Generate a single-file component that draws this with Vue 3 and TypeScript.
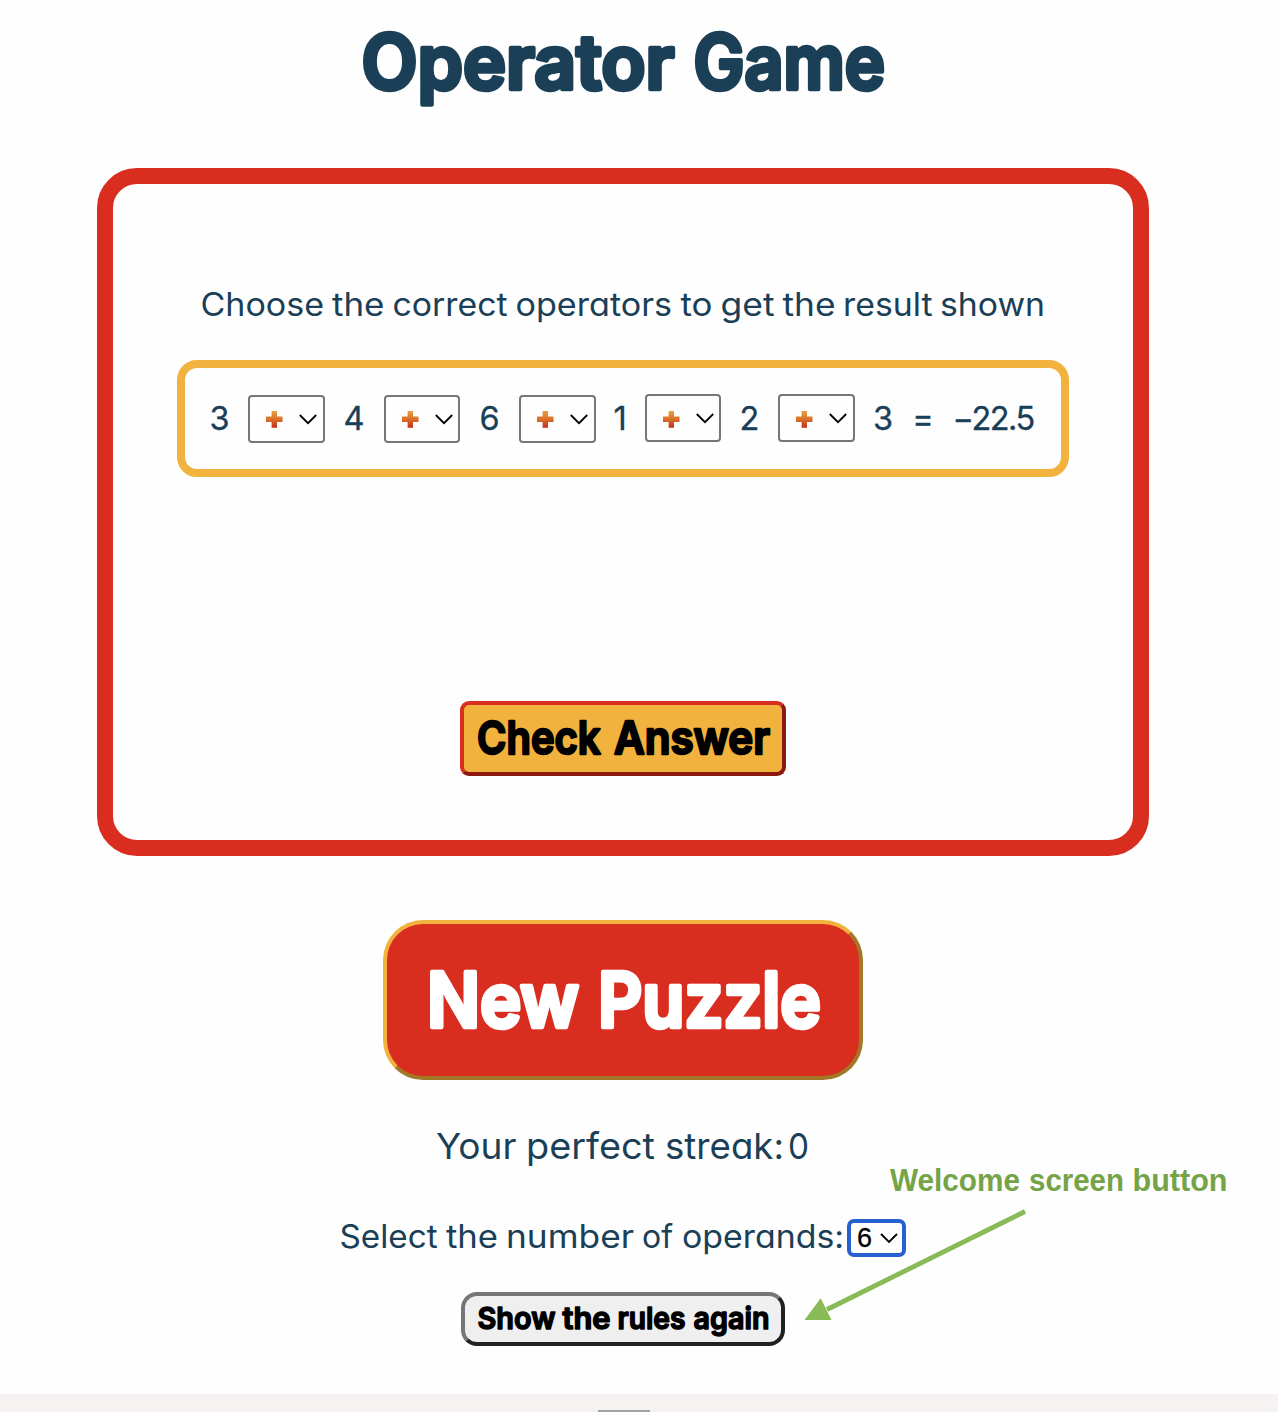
<script setup lang="ts">
import { h, ref, type FunctionalComponent } from 'vue'

// A word with its start and its width, in pixels from the left of its line.
type Word = [text: string, x: number, width: number]

interface LineProps {
  words: Word[]
  width: number
  height: number
  baseline: number
}

const Line: FunctionalComponent<LineProps> = (p) =>
  h(
    'svg',
    { class: 'line', width: p.width, height: p.height, viewBox: `0 0 ${p.width} ${p.height}` },
    p.words.map(([text, x, width]) =>
      h('text', { x, y: p.baseline, textLength: width, lengthAdjust: 'spacingAndGlyphs' }, text),
    ),
  )
Line.props = ['words', 'width', 'height', 'baseline']

const title: Word[] = [['Operator', 1.5, 313], ['Game', 333.5, 191.5]]
const prompt: Word[] = [
  ['Choose', 0.5, 123.5], ['the', 132, 52.5], ['correct', 192.5, 115], ['operators', 315.5, 156.5], ['to', 480.5, 32],
  ['get', 520.5, 54], ['the', 582.5, 53], ['result', 643, 89.5], ['shown', 740, 105],
]
const check: Word[] = [['Check', 13, 123.5], ['Answer', 150, 156]]
const puzzle: Word[] = [['New', 40, 152], ['Puzzle', 211, 223]]
const streak: Word[] = [['Your', 0, 80.5], ['perfect', 90, 129], ['streak:', 229, 119], ['0', 352, 21]]
const operandLabel: Word[] = [
  ['Select', -0.5, 98], ['the', 106, 52], ['number', 166, 128], ['of', 302, 31], ['operands:', 342, 162],
]
const rules: Word[] = [['Show', 12.5, 78], ['the', 97.5, 48], ['rules', 152.5, 68], ['again', 228.5, 76]]
const note: Word[] = [['Welcome', 0, 130], ['screen', 139, 95], ['button', 242.500, 95]]

interface Term {
  value: string
}
const terms = ref<Term[]>([{ value: '3' }, { value: '4' }, { value: '6' }, { value: '1' }, { value: '2' }])
const raised = (i: number) => i > 2
</script>

<template>
  <div class="page">
    <main>
      <h1><Line :words="title" :width="526" :height="90" :baseline="67.3" /></h1>

      <section class="board">
        <p class="body prompt"><Line :words="prompt" :width="846" :height="40" :baseline="29.5" /></p>
        <div class="equation body">
          <template v-for="(t, i) in terms" :key="i">
            <span class="num" :class="'n' + i">{{ t.value }}</span>
            <span class="operator" :class="{ raised: raised(i) }">
              <svg width="72" height="44" viewBox="0 0 72 44">
                <defs>
                  <linearGradient id="fire" x1="0" y1="0" x2="0" y2="1">
                    <stop offset="0" stop-color="#e7a23c" />
                    <stop offset=".5" stop-color="#d9702a" />
                    <stop offset="1" stop-color="#c62d1b" />
                  </linearGradient>
                </defs>
                <path :transform="raised(i) ? 'translate(0 .5)' : 'translate(0 -.5)'" fill="url(#fire)" d="M21.600 14.500h5.400v5.600h5.500v5.400h-5.500v5.700h-5.400v-5.700h-5.600v-5.400h5.600z" />
                <path class="chevron" d="M49.800 18l8.200 8.200 8.200-8.200" />
              </svg>
            </span>
          </template>
          <span class="num last">3</span>
          <span class="num equals">=</span>
          <span class="num result">−22.5</span>
        </div>
        <button class="display check"><Line :words="check" :width="318" :height="67" :baseline="49" /></button>
      </section>

      <button class="display puzzle"><Line :words="puzzle" :width="472" :height="152" :baseline="102.5" /></button>

      <p class="body streak"><Line :words="streak" :width="374" :height="50" :baseline="38.5" /></p>

      <div class="body operands">
        <Line :words="operandLabel" :width="507" :height="38" :baseline="28.5" />
        <span class="count">
          <span>6</span>
          <svg width="18" height="12" viewBox="0 0 18 12"><path class="chevron" d="M1 2l8 8 8-8" /></svg>
        </span>
      </div>

      <button class="display rules"><Line :words="rules" :width="316" :height="46" :baseline="33" /></button>
    </main>

    <footer><span></span></footer>

    <aside class="note">
      <Line :words="note" :width="340" :height="36" :baseline="28" />
      <svg class="arrow" width="230" height="116" viewBox="0 0 230 116">
        <path d="M222 5.500L24 103.500" stroke="#88ba55" stroke-width="4.800" />
        <path d="M1.500 114L17.700 92.200 28.500 114z" fill="#88ba55" />
      </svg>
    </aside>
  </div>
</template>

<style>
body {
  margin: 0;
  background: #fefefe;
}
svg.line {
  display: block;
  overflow: visible;
  fill: currentColor;
}
</style>

<style scoped>
* {
  box-sizing: border-box;
}
.page {
  position: relative;
  height: 1412px;
  overflow: hidden;
  display: flex;
  flex-direction: column;
  justify-content: space-between;
  color: #1a3f56;
}
main {
  width: 1246px;
  display: flex;
  flex-direction: column;
  align-items: center;
}
h1, p {
  margin: 0;
}
h1, .display {
  font-family: Inter, "Liberation Sans", sans-serif;
  font-weight: 600;
  stroke: currentColor;
  stroke-linejoin: round;
}
h1 {
  height: 168px;
  padding-top: 22px;
  font-size: 75px;
  stroke-width: 4.500px;
}
.body {
  font-family: Inter, "Liberation Sans", sans-serif;
  font-size: 32px;
  font-weight: 400;
  font-feature-settings: "cv11";
  -webkit-text-stroke: 0.300px currentColor;
}
.board {
  width: 1052px;
  height: 688px;
  padding-top: 102px;
  border: 16px solid #d92d20;
  border-radius: 40px;
  display: flex;
  flex-direction: column;
  align-items: center;
}
.prompt {
  margin-bottom: 34px;
}
.equation {
  width: 892px;
  height: 117px;
  padding-left: 16px;
  border: 8px solid #f1b23e;
  border-radius: 20px;
  display: flex;
  align-items: center;
  font-size: 32.500px;
  white-space: nowrap;
}
.num {
  width: 47px;
  flex: none;
  text-align: center;
}
.n0 {
  width: 37px;
  margin-right: 10px;
}
.n1, .n2 {
  width: 59px;
}
.n3 {
  width: 49px;
}
.n4 {
  width: 57px;
}
.last {
  width: 57px;
}
.equals {
  width: 23px;
}
.result {
  width: 80px;
  margin-left: 18px;
  text-align: left;
  letter-spacing: -1.500px;
}
.operator {
  flex: none;
  width: 76.500px;
  height: 48px;
  margin-top: 1px;
  border: 2px solid #767676;
  border-radius: 4px;
}
.operator.raised {
  margin-top: -1px;
}
.operator svg {
  display: block;
}
.chevron {
  fill: none;
  stroke: #000;
  stroke-width: 1.800;
}
button {
  flex: none;
  padding: 0;
  border: 4px solid;
  display: block;
}
.check {
  width: 326px;
  height: 75px;
  margin-top: 224px;
  border-color: #d92d20 #8b190f #8b190f #d92d20;
  border-radius: 9px;
  background: #f1b23e;
  color: #000;
  font-size: 45.500px;
  stroke-width: 2.400px;
}
.puzzle {
  width: 480px;
  height: 160px;
  margin-top: 64px;
  border-color: #f1b23e #a27728 #a27728 #f1b23e;
  border-radius: 40px;
  background: #d92d20;
  color: #fff;
  font-size: 75px;
  stroke-width: 4.500px;
}
.streak {
  margin-top: 40px;
  font-size: 36px;
}
.operands {
  margin-top: 49px;
  display: flex;
  align-items: center;
}
.count {
  width: 59px;
  height: 38px;
  border: 4px solid #2760cf;
  border-radius: 7px;
  display: flex;
  align-items: center;
  gap: 8px;
  padding-left: 6px;
  font: 27px "Liberation Sans", sans-serif;
  color: #000;
}
.rules {
  width: 324px;
  height: 54px;
  margin-top: 35px;
  border-color: #767676 #212121 #212121 #767676;
  border-radius: 16px;
  background: #efefef;
  color: #000;
  font-size: 30.500px;
  stroke-width: 1.500px;
}
footer {
  height: 18px;
  background: #f5f2f1;
  display: flex;
  align-items: flex-end;
}
footer span {
  width: 52px;
  height: 2px;
  margin-left: 598px;
  background: #a5a3a2;
}
.note {
  position: absolute;
  left: 803px;
  top: 1163px;
  padding-left: 87px;
  color: #75a347;
  font: bold 31px "Liberation Sans", sans-serif;
}
.arrow {
  display: block;
  margin: 7px 0 0 -87px;
}
</style>
